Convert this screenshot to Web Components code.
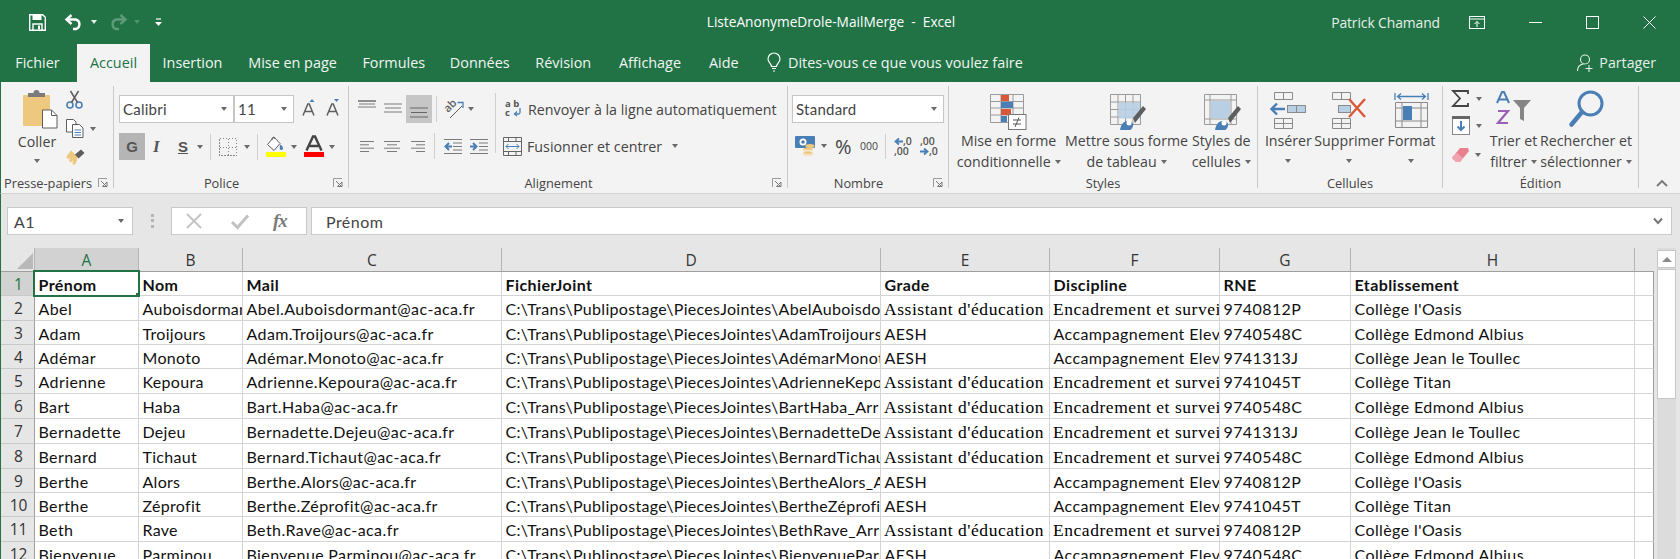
<!DOCTYPE html>
<html lang="fr"><head><meta charset="utf-8"><title>Excel</title>
<style>
html,body{margin:0;padding:0;height:559px;overflow:hidden;background:#e6e6e6}
body{font-family:"Open Sans","Noto Sans",sans-serif;color:#333}
</style></head><body>
<xl-app>
  <xl-titlebar slot="x"></xl-titlebar>
  <xl-tabs></xl-tabs>
  <xl-ribbon></xl-ribbon>
  <xl-formula></xl-formula>
  <xl-sheet></xl-sheet>
</xl-app>
<script>
const G='#7b7b7b',D='#5e5e5e',B='#4a7fb5',O='#d8593a',T='#edc87e';
const ICONS={
save:[17,17,`<path d="M.7.7h13l2.6 2.6v13H.7z" fill="none" stroke="#fff" stroke-width="1.4"/><path d="M3.5 1v5h9V1z" fill="#fff"/><path d="M4 16v-6h9v6" fill="none" stroke="#fff" stroke-width="1.4"/><rect x="9" y="11.5" width="2" height="4" fill="#fff"/>`],
undo:[19,16,`<path d="M6.5 1 1.5 5.5l5 4.5" fill="none" stroke="#fff" stroke-width="2.4"/><path d="M2 5.5h9a5 5 0 0 1 0 9.5H8" fill="none" stroke="#fff" stroke-width="2.4"/>`],
redo:[19,16,`<g opacity=".28"><path d="M12.5 1l5 4.5-5 4.5" fill="none" stroke="#fff" stroke-width="2.4"/><path d="M17 5.5H8a5 5 0 0 0 0 9.5h3" fill="none" stroke="#fff" stroke-width="2.4"/></g>`],
qat:[7,9,`<path d="M1 1h5" stroke="#fff" stroke-width="1.2"/><path d="M0 4h7L3.500 8z" fill="#fff"/>`],
display:[16,13,`<rect x=".5" y=".5" width="15" height="12" fill="none" stroke="#fff"/><path d="M0 3h16" stroke="#fff"/><path d="M8 11V5.500M5.500 8 8 5.500 10.500 8" fill="none" stroke="#fff"/>`],
min:[13,13,`<path d="M0 6.500h13" stroke="#fff"/>`],
max:[13,13,`<rect x=".5" y=".5" width="12" height="12" fill="none" stroke="#fff"/>`],
close:[13,13,`<path d="M.5.5l12 12M12.500.5l-12 12" stroke="#fff"/>`],
bulb:[14,19,`<path d="M4.500 13.500C4.500 10.500 1 9.500 1 6a6 6 0 0 1 12 0c0 3.500-3.500 4.500-3.500 7.500z" fill="none" stroke="#fff" stroke-width="1.2"/><path d="M5 15.500h4M6 18h2" stroke="#fff" stroke-width="1.2"/>`],
share:[16,18,`<circle cx="8" cy="5.500" r="4.500" fill="none" stroke="#e6efe9" stroke-width="1.1"/><path d="M.5 17c0-4 2.500-6.500 6-7" fill="none" stroke="#e6efe9" stroke-width="1.1"/><path d="M8.500 14.500h7M12 11v7" stroke="#e6efe9" stroke-width="1.1"/>`],
paste:[35,39,`<rect x="0" y="5" width="27" height="31" rx="1" fill="${T}"/><path d="M5 7V3h5.500a3 3 0 0 1 6 0H22v4z" fill="${G}"/><path d="M19.500 20h9l5.500 5.500V38H19.500z" fill="#fff" stroke="${D}"/><path d="M28.500 20v5.500H34" fill="none" stroke="${D}"/>`],
cut:[17,19,`<circle cx="4" cy="15" r="3" fill="none" stroke="${B}" stroke-width="1.6"/><circle cx="13" cy="15" r="3" fill="none" stroke="${B}" stroke-width="1.6"/><path d="M5.500 12.500 12.500 1M11.500 12.500 4.500 1" stroke="${D}" stroke-width="1.5"/>`],
copy:[18,19,`<path d="M.5.500h7l2.500 2.500v10H.5z" fill="#fff" stroke="${D}"/><path d="M6.500 5.500h7l3.500 3.500v9.500H6.500z" fill="#fff" stroke="${D}"/><path d="M8.500 11h6.500M8.500 13.500h6.500M8.500 16h6.500" stroke="${B}"/>`],
brush:[19,17,`<path d="M11 6 5 .5.500 6.500 1.500 9 4 8 3 11l2 1.500 2-2.500-.5 4 2 1C11 12 12 9 11 6z" transform="translate(0 1)" fill="${T}"/><path d="M9 5.500 15 .5l3.500 3.500-6 5.500z" fill="${D}"/>`],
grow:[15,17,`<path d="M1 16.500 5.800 5h1.400l4.800 11.500M2.800 12.500h7.400" fill="none" stroke="${D}" stroke-width="1.500"/><path d="M7.500 3 10 0l2.500 3z" fill="${B}"/>`],
shrink:[15,17,`<path d="M1 16.500 5.800 5h1.400l4.800 11.500M2.800 12.500h7.400" fill="none" stroke="${D}" stroke-width="1.500"/><path d="M8 0h5l-2.500 3z" fill="${B}"/>`],
borders:[18,18,`<path d="M.5.500h17v17H.5zM9 .5v17M.5 9h17" fill="none" stroke="#8a8a8a" stroke-dasharray="1.500 1.500" shape-rendering="crispEdges"/>`],
fill:[20,21,`<path d="M8 1 1.500 8.500 8 14.500l6-7z" fill="#fff" stroke="${D}"/><path d="M6 4c-1-3 3-4 3-1" fill="none" stroke="${D}"/><path d="M14 8.500c2 1 3 2 3 4a1.600 1.600 0 0 1-3.200 0c0-1 0-2 .2-4z" fill="${B}"/><rect x="0" y="16" width="20" height="5" fill="#ffff00"/>`],
color:[20,21,`<path d="M2.500 14.500 9 .5h2l6.500 14M5.500 10h9" fill="none" stroke="#444" stroke-width="2.400"/><rect x="0" y="16" width="20" height="5" fill="#ff0000"/>`],
atop:[18,9,`<path d="M0 1h18M1 4h16M0 7h18" stroke="${G}"/><path d="M0 1h18" stroke="#666"/>`],
amid:[18,10,`<path d="M0 1h18M1 5h16M0 9h18" stroke="${G}"/>`],
abot:[18,11,`<path d="M0 1h18M1 5.500h16M0 10h18" stroke="#666" stroke-width="1"/>`],
orient:[20,20,`<text x="1" y="11" transform="rotate(-45 6 9)" font-family="Open Sans" font-size="11" font-weight="600" fill="${D}">ab</text><path d="M6 19 18 7" stroke="${D}"/><path d="M13.500 3.500H19V9" fill="none" stroke="${B}" stroke-width="1.300"/>`],
left:[14,11,`<path d="M0 .5h14M0 3.800h9M0 7.200h14M0 10.500h9" stroke="${G}"/>`],
center:[16,11,`<path d="M0 .5h16M3 3.800h10M0 7.200h16M3 10.500h10" stroke="${G}"/>`],
right:[14,11,`<path d="M0 .5h14M5 3.800h9M0 7.200h14M5 10.500h9" stroke="${G}"/>`],
outdent:[18,15,`<path d="M0 .5h18M9 4h9M9 7.500h9M9 11h9M0 14.500h18" stroke="${G}"/><path d="M8 7.500H2M5 4 1.500 7.500 5 11" fill="none" stroke="${B}" stroke-width="2"/>`],
indent:[18,15,`<path d="M0 .5h18M9 4h9M9 7.500h9M9 11h9M0 14.500h18" stroke="${G}"/><path d="M0 7.500h6M3 4l3.500 3.500L3 11" fill="none" stroke="${B}" stroke-width="2"/>`],
wrap:[16,16,`<path d="M9.500 15h4a1.800 1.800 0 0 0 1.500-1.500V9" fill="none" stroke="${B}" stroke-width="1.300"/><path d="M12 12.500 9.500 15l2.500 2" fill="none" stroke="${B}" stroke-width="1.300"/>`],
merge:[19,19,`<path d="M.5.500h18v18H.5zM.5 4.500h18M.5 14.500h18M5.500.5v4M13 .5v4M5.500 14.500v4M13 14.500v4" fill="none" stroke="#666"/><path d="M3 9.500h13M5.500 7 3 9.500 5.500 12M13.500 7l2.500 2.500-2.500 2.500" fill="none" stroke="${B}"/>`],
currency:[20,20,`<rect x="0" y="0" width="20" height="12" rx="1" fill="${B}"/><ellipse cx="8" cy="6" rx="3.500" ry="3.500" fill="#fff"/><circle cx="8" cy="6" r="1.800" fill="${B}"/><g fill="${T}"><ellipse cx="15" cy="10" rx="4.500" ry="2"/><ellipse cx="13" cy="13.500" rx="5" ry="2"/><ellipse cx="13" cy="17.500" rx="5" ry="2"/></g><path d="M8.500 13.500a5 2 0 0 0 9 0M8.500 17.500a5 2 0 0 0 9 0" stroke="#fff" fill="none" stroke-width=".7"/>`],
arrl:[9,7,`<path d="M9 3.500H2M5 .5 1.500 3.500 5 6.500" fill="none" stroke="${B}" stroke-width="1.800"/>`],
arrr:[9,7,`<path d="M0 3.500h7M4 .5l3.500 3L4 6.500" fill="none" stroke="${B}" stroke-width="1.800"/>`],
cf:[37,36,`<path d="M.5.500h33v28H.5zM.5 7.500h33M.5 14h33M.5 21h33M11 .5v28M23 .5v28" fill="none" stroke="#9a9a9a"/><rect x="11" y="1" width="8" height="6" fill="${O}"/><rect x="11" y="8" width="12" height="6" fill="${B}"/><rect x="11" y="15" width="10" height="6" fill="${O}"/><rect x="11" y="22" width="6" height="6" fill="${B}"/><rect x="18.500" y="20.500" width="17.500" height="15" fill="#fff" stroke="#777"/><path d="M23 26h8M23 30h8M29 23.500l-4 9.500" stroke="#555" fill="none"/>`],
table:[37,36,`<path d="M.5.500h30v30H.5zM.5 8h30M.5 15.500h30M.5 23h30M8 .5v30M15.500.5v30M23 .5v30" fill="none" stroke="#9a9a9a"/><rect x="8.500" y="8.500" width="21.500" height="16" fill="#b9cfe4" opacity=".9"/><path d="M25 30 36 16l-3-3-10 12z" fill="${D}" transform="translate(0 -1)"/><path d="M10 36c1-5 3-9 8-9 3 0 6 2 5 5-.5 2-2 4-3 4z" fill="${B}"/><circle cx="19" cy="29" r="2.500" fill="#fff"/>`],
styles:[38,36,`<path d="M.5.500h32v30H.5zM.5 6h32M.5 25h32M6 .5v30M27 .5v30" fill="none" stroke="#9a9a9a"/><rect x="7" y="7" width="19" height="17" fill="#b9cfe4"/><path d="M26 30 37 16l-3-3-10 12z" fill="${D}" transform="translate(0 -1)"/><path d="M11 36c1-5 3-9 8-9 3 0 6 2 5 5-.5 2-2 4-3 4z" fill="${B}"/><circle cx="20" cy="29" r="2.500" fill="#fff"/>`],
ins:[36,37,`<path d="M4.500.5h18v7h-18zM13.500.5v7M4.500 26.500h18v10h-18zM13.500 26.500v10M4.500 31.500h18" fill="none" stroke="#8a8a8a"/><rect x="17.500" y="13.500" width="18" height="7" fill="#b9cfe4" stroke="#8a8a8a"/><path d="M26.500 13.500v7" stroke="#8a8a8a"/><path d="M15 17H2M7 11.500 1.500 17 7 22.500" fill="none" stroke="${B}" stroke-width="2.400"/>`],
del:[36,37,`<path d="M1.500.5h18v7h-18zM10.500.5v7M1.500 26.500h18v10h-18zM10.500 26.500v10M1.500 31.500h18" fill="none" stroke="#8a8a8a"/><rect x="7.500" y="13.500" width="12" height="7" fill="#b9cfe4" stroke="#8a8a8a"/><path d="M18 7l16 18M34 7 18 25" stroke="${O}" stroke-width="2.400"/>`],
fmt:[35,37,`<path d="M1 1v7M34 1v7M4 4.500h27M7 1.500 3.500 4.500 7 7.500M28 1.500l3.500 3L28 7.500" fill="none" stroke="${B}" stroke-width="1.300"/><path d="M1.500 10.500h32v25h-32zM1.500 16h32M1.500 29h32M8 10.500v25M27 10.500v25" fill="none" stroke="#8a8a8a"/><rect x="9" y="14" width="9" height="14" fill="${B}"/>`],
sigma:[17,17,`<path d="M16 4V1H1l7 7.500L1 16h15v-3" fill="none" stroke="#444" stroke-width="1.800"/>`],
filldown:[18,19,`<rect x=".5" y=".5" width="17" height="18" fill="#fff" stroke="#888"/><rect x="0" y="0" width="18" height="3" fill="#666"/><path d="M9 5v9M5.500 10.500 9 14l3.500-3.500" fill="none" stroke="${B}" stroke-width="2"/>`],
erase:[18,16,`<path d="M9 1l8 0 1 3L9 15H5L1 11z" transform="translate(-1 0)" fill="#e8808f"/><path d="M0 10l4 5h4l3-4-6-5z" fill="#f0a4ae"/>`],
sort:[36,33,`<path d="M0 11 5 0h2l5 11M2 7.500h8" transform="translate(1 0)" fill="none" stroke="${B}" stroke-width="2"/><path d="M2 19h10L2 31h10" fill="none" stroke="#9a5fb8" stroke-width="2.200"/><path d="M17 8h18l-7 8v13l-4-2V16z" fill="#858585"/>`],
find:[35,37,`<circle cx="21.500" cy="13.500" r="11.500" fill="none" stroke="${B}" stroke-width="3"/><path d="M13 22 2.500 34.500" stroke="${B}" stroke-width="4.500" stroke-linecap="round"/>`],
launch:[10,10,`<path d="M.5 9V.5H9" fill="none" stroke="#9a9a9a"/><path d="M3 3l5 5M4.500 8.500h4.500V4z" fill="none" stroke="#777"/>`],
chevup:[12,7,`<path d="M1 6l5-5 5 5" fill="none" stroke="#777" stroke-width="1.800"/>`],
chevdown:[10,8,`<path d="M1 1.500 5 6l4-4.500" fill="none" stroke="#777" stroke-width="2"/>`],
xmark:[16,16,`<path d="M1 1l14 14M15 1 1 15" stroke="#c2c2c2" stroke-width="1.800"/>`],
check:[18,15,`<path d="M1 8l5.500 5.500L17 1.500" fill="none" stroke="#c2c2c2" stroke-width="3"/>`],
corner:[16,16,`<path d="M16 0v16H0z" fill="#b9b9b9"/>`]
};
function def(name,css,html,init){
  customElements.define(name,class extends HTMLElement{
    constructor(){super();const r=this.attachShadow({mode:'open'});
      r.innerHTML=`<style>${css}</style>`+(typeof html==='function'?html(this):html);}
    connectedCallback(){ if(init) init(this); }
  });
}
def('xl-i',`:host{display:inline-flex;flex:none;line-height:0}svg{display:block;overflow:visible}`,'',el=>{
  const [w,h,s]=ICONS[el.getAttribute('n')];
  el.shadowRoot.innerHTML+=`<svg width="${w}" height="${h}" viewBox="0 0 ${w} ${h}">${s}</svg>`;
});
def('xl-c',`:host{display:inline-block;flex:none;width:0;height:0;border:3.5px solid transparent;border-top:4px solid var(--c,#6a6a6a);border-bottom:0;vertical-align:middle}`,'');

/* ---------- app ---------- */
def('xl-app',`:host{display:flex;flex-direction:column;width:1680px;height:559px;overflow:hidden}`,`<slot></slot><slot name="x"></slot>`);

/* ---------- title bar ---------- */
def('xl-titlebar',`:host{display:flex;align-items:center;height:44px;background:#217346;color:#fff;font:13.7px "Open Sans",sans-serif;order:-1;position:relative;flex:none}
.qat{display:flex;align-items:center;padding-left:29px;--c:#e8f0ea}
.title{position:absolute;left:0;right:0;top:13px;text-align:center;line-height:18px;pointer-events:none;padding-right:18px;white-space:pre}
.user{margin-left:auto;margin-right:29px;color:#e6efe9;font-size:13.9px;letter-spacing:-.1px}
.win{display:flex;align-items:center;padding-right:24px}`,
`<div class="qat"><xl-i n="save"></xl-i><xl-i n="undo" style="margin-left:19px"></xl-i><xl-c style="margin-left:7px"></xl-c><xl-i n="redo" style="margin-left:11px"></xl-i><xl-c style="margin-left:7px;--c:#4f8f6b"></xl-c><xl-i n="qat" style="margin-left:15px"></xl-i></div>
<div class="title">ListeAnonymeDrole-MailMerge  -  Excel</div>
<div class="user">Patrick Chamand</div>
<div class="win"><xl-i n="display"></xl-i><xl-i n="min" style="margin-left:44px"></xl-i><xl-i n="max" style="margin-left:44px"></xl-i><xl-i n="close" style="margin-left:44px"></xl-i></div>`);

/* ---------- tabs ---------- */
def('xl-tab',`:host{display:flex;align-items:center;justify-content:center;height:38px;box-sizing:border-box;padding-bottom:2px;color:#f0f5f2;flex:none;white-space:nowrap}
:host([on]){background:#f3f3f3;color:#217346}`,`<slot></slot>`,el=>{el.style.width=el.getAttribute('w')+'px'});
def('xl-tabs',`:host{display:flex;height:38px;flex:none;background:#217346;font:14.4px "Open Sans",sans-serif;color:#fff;align-items:center}
.tell{display:flex;align-items:center;margin-left:15px;color:#f0f5f2;gap:7px;padding-bottom:2px}
.share{margin-left:auto;margin-right:24px;display:flex;align-items:center;gap:6px;color:#e6efe9;padding-bottom:1px;font-size:14.2px}`,
`<xl-tab w="75">Fichier</xl-tab><xl-tab w="2"></xl-tab><xl-tab w="73" on>Accueil</xl-tab><xl-tab w="85">Insertion</xl-tab><xl-tab w="115">Mise en page</xl-tab><xl-tab w="87.500">Formules</xl-tab><xl-tab w="84.500">Données</xl-tab><xl-tab w="82.500">Révision</xl-tab><xl-tab w="91">Affichage</xl-tab><xl-tab w="56.500">Aide</xl-tab>
<div class="tell"><xl-i n="bulb"></xl-i><span>Dites-vous ce que vous voulez faire</span></div>
<div class="share"><xl-i n="share"></xl-i><span>Partager</span></div>`);

/* ---------- ribbon parts ---------- */
def('xl-group',`:host{display:flex;flex-direction:column;flex:none;height:111px;box-sizing:border-box;position:relative;border-right:1px solid transparent}
.sep{position:absolute;right:-1px;top:4px;bottom:5px;width:1px;background:#c9c9c9}
.body{display:flex;height:93px;box-sizing:border-box;flex:none}
.label{display:flex;align-items:center;justify-content:center;height:16px;font-size:12.8px;color:#444;position:relative;white-space:nowrap}
:host([launch]) .label{padding-right:19px}
.label xl-i{position:absolute;top:3px;right:5px}`,
el=>`<div class="sep"></div><div class="body"><slot></slot></div><div class="label"><span class="t"></span><xl-i n="launch" class="li"></xl-i></div>`,
el=>{const s=el.shadowRoot;el.style.width=el.getAttribute('w')+'px';s.querySelector('.t').textContent=el.getAttribute('label');
 if(!el.hasAttribute('launch')) s.querySelector('.li').remove();
 if(el.hasAttribute('lp')) s.querySelector('.label').style.cssText+=';justify-content:flex-start;padding-left:'+el.getAttribute('lp')+'px';});
def('xl-big',`:host{display:flex;flex-direction:column;align-items:center;flex:none;font-size:14.2px;line-height:20.500px;color:#444;text-align:center;white-space:nowrap}
.ic{height:49px;display:flex;align-items:flex-start;justify-content:center;padding-top:var(--pt,8px);box-sizing:border-box}
.txt{display:flex;flex-direction:column;align-items:center}`,
el=>`<div class="ic"><slot name="i"></slot></div><div class="txt"><slot></slot></div>`);
def('xl-combo',`:host{display:flex;align-items:center;justify-content:space-between;height:28px;box-sizing:border-box;background:#fff;border:1px solid #c6c6c6;padding:0 6px 0 3px;font:15px "Lato",sans-serif;letter-spacing:.25px;color:#444;flex:none}`,`<slot></slot><xl-c></xl-c>`,el=>{el.style.width=el.getAttribute('w')+'px'});
def('xl-col',`:host{display:flex;flex-direction:column;flex:none}`,`<slot></slot>`);
def('xl-row',`:host{display:flex;align-items:center;flex:none}`,`<slot></slot>`);
def('xl-tsep',`:host{display:block;width:1px;height:26px;background:#cfcfcf;flex:none}`,``);

def('xl-ribbon',`:host{display:flex;height:112px;flex:none;background:#f3f3f3;border-bottom:1px solid #d2d2d2;box-sizing:border-box;border-left:1px solid #217346;color:#444;font:14.2px "Open Sans",sans-serif;position:relative}
.b{font:bold 15px "Open Sans",sans-serif;color:#555}
.t{white-space:nowrap;font-size:14.25px;color:#444}
.chev{position:absolute;right:12px;bottom:6px}
.dec{display:flex;flex-direction:column;font:600 10.500px/10px "Open Sans",sans-serif;color:#555;width:18px}
.dec span{display:flex;align-items:center}`,
`<xl-group w="113" label="Presse-papiers" launch lp="3">
  <xl-col style="margin:8px 0 0 22px;align-items:center;width:35px"><xl-i n="paste"></xl-i><span style="margin:3px 7px 0 0;line-height:20px">Coller</span><xl-c style="margin:7px 7px 0 0"></xl-c></xl-col>
  <xl-col style="margin:8px 0 0 8px"><xl-i n="cut"></xl-i><xl-row style="margin-top:10px"><xl-i n="copy"></xl-i><xl-c style="margin-left:6px"></xl-c></xl-row><xl-i n="brush" style="margin-top:11px"></xl-i></xl-col>
</xl-group>
<xl-group w="235" label="Police" launch>
  <xl-col style="margin:13px 0 0 5px">
    <xl-row><xl-combo w="115">Calibri</xl-combo><xl-combo w="60">11</xl-combo><xl-i n="grow" style="margin-left:8px;margin-top:-4px"></xl-i><xl-i n="shrink" style="margin-left:9px;margin-top:-4px"></xl-i></xl-row>
    <xl-row style="margin-top:10px;height:27px"><span class="b" style="width:26px;height:27px;background:#b5b5b5;display:flex;align-items:center;justify-content:center;font-family:'Liberation Sans'">G</span>
      <span class="b" style="margin-left:8px;width:12px;font-style:italic;font-family:'Liberation Serif';font-size:17px">I</span>
      <span class="b" style="margin-left:13px;text-decoration:underline;font-family:'Liberation Sans'">S</span><xl-c style="margin-left:9px"></xl-c>
      <xl-tsep style="margin-left:7px"></xl-tsep><xl-i n="borders" style="margin-left:8px"></xl-i><xl-c style="margin-left:7px"></xl-c>
      <xl-tsep style="margin-left:7px"></xl-tsep><xl-i n="fill" style="margin-left:8px"></xl-i><xl-c style="margin-left:5px"></xl-c><xl-i n="color" style="margin-left:7px"></xl-i><xl-c style="margin-left:5px"></xl-c></xl-row>
  </xl-col>
</xl-group>
<xl-group w="439" label="Alignement" launch>
  <xl-col style="margin:13px 0 0 9px">
    <xl-row style="height:28px"><xl-i n="atop" style="margin-bottom:9px"></xl-i><xl-i n="amid" style="margin-left:8px;margin-bottom:2px"></xl-i>
      <span style="margin-left:4px;width:26px;height:28px;background:#c6c6c6;display:flex;align-items:flex-end;justify-content:center;padding-bottom:5px;box-sizing:border-box"><xl-i n="abot"></xl-i></span>
      <xl-tsep style="margin-left:4px"></xl-tsep><xl-i n="orient" style="margin-left:7px"></xl-i><xl-c style="margin-left:4px"></xl-c></xl-row>
    <xl-row style="margin-top:10px;height:26px"><xl-i n="left" style="margin-left:2px"></xl-i><xl-i n="center" style="margin-left:10px"></xl-i><xl-i n="right" style="margin-left:11px"></xl-i><xl-tsep style="margin-left:9px"></xl-tsep><xl-i n="outdent" style="margin-left:9px"></xl-i><xl-i n="indent" style="margin-left:8px"></xl-i></xl-row>
  </xl-col>
  <xl-tsep style="height:60px;margin:11px 0 0 7px"></xl-tsep>
  <xl-col style="margin:13px 0 0 7px">
    <xl-row style="height:28px"><span style="width:17px;height:20px;position:relative;display:block;margin-left:2px;font:bold 9.500px/9px 'Open Sans';color:#555"><span style="display:block">a b</span><span style="display:block">c</span><xl-i n="wrap" style="position:absolute;left:0;top:0"></xl-i></span><span class="t" style="margin-left:6px">Renvoyer à la ligne automatiquement</span></xl-row>
    <xl-row style="margin-top:10px;height:26px"><xl-i n="merge"></xl-i><span class="t" style="margin-left:5px">Fusionner et centrer</span><xl-c style="margin-left:10px"></xl-c></xl-row>
  </xl-col>
</xl-group>
<xl-group w="161" label="Nombre" launch>
  <xl-col style="margin:13px 0 0 4px">
    <xl-combo w="152">Standard</xl-combo>
    <xl-row style="margin-top:13px;height:20px"><xl-i n="currency" style="margin-left:3px"></xl-i><xl-c style="margin-left:6px"></xl-c><span style="margin-left:8px;font-size:20px;width:19px">%</span><span style="margin-left:6px;font-size:10.500px;width:20px">000</span><xl-tsep style="margin-left:5px;height:25px"></xl-tsep>
    <div class="dec" style="margin-left:8px"><span><xl-i n="arrl"></xl-i>,0</span><span>,00</span></div><div class="dec" style="margin-left:8px"><span>,00</span><span><xl-i n="arrr"></xl-i>,0</span></div></xl-row>
  </xl-col>
</xl-group>
<xl-group w="309" label="Styles">
  <xl-big style="width:119.400px;--pt:12px"><xl-i slot="i" n="cf"></xl-i><span>Mise en forme</span><xl-row>conditionnelle<xl-c style="margin-left:4px"></xl-c></xl-row></xl-big>
  <xl-big style="width:116.400px;--pt:12px"><xl-i slot="i" n="table" style="margin-left:3px"></xl-i><span>Mettre sous forme</span><xl-row>de tableau<xl-c style="margin-left:4px"></xl-c></xl-row></xl-big>
  <xl-big style="width:73px;--pt:12px"><xl-i slot="i" n="styles" style="margin-left:4px"></xl-i><span>Styles de</span><xl-row>cellules<xl-c style="margin-left:4px"></xl-c></xl-row></xl-big>
</xl-group>
<xl-group w="185" label="Cellules">
  <xl-big style="width:60.800px;--pt:10px"><xl-i slot="i" n="ins"></xl-i><span>Insérer</span><xl-c style="margin-top:7px"></xl-c></xl-big>
  <xl-big style="width:61.200px;--pt:10px"><xl-i slot="i" n="del"></xl-i><span>Supprimer</span><xl-c style="margin-top:7px"></xl-c></xl-big>
  <xl-big style="width:63px;--pt:10px"><xl-i slot="i" n="fmt"></xl-i><span>Format</span><xl-c style="margin-top:7px"></xl-c></xl-big>
</xl-group>
<xl-group w="196" label="Édition">
  <xl-col style="margin:8px 0 0 9px;width:33px"><xl-row><xl-i n="sigma"></xl-i><xl-c style="margin-left:7px"></xl-c></xl-row><xl-row style="margin-top:9px"><xl-i n="filldown"></xl-i><xl-c style="margin-left:6px"></xl-c></xl-row><xl-row style="margin-top:12px"><xl-i n="erase"></xl-i><xl-c style="margin-left:5px"></xl-c></xl-row></xl-col>
  <xl-big style="width:45px;margin-left:6px;--pt:10px"><xl-i slot="i" n="sort"></xl-i><span>Trier et</span><xl-row>filtrer<xl-c style="margin-left:4px"></xl-c></xl-row></xl-big>
  <xl-big style="width:100px;--pt:8px"><xl-i slot="i" n="find"></xl-i><span>Rechercher et</span><xl-row>sélectionner<xl-c style="margin-left:4px"></xl-c></xl-row></xl-big>
</xl-group>
<xl-i n="chevup" class="chev"></xl-i>`);

/* ---------- formula bar ---------- */
def('xl-formula',`:host{display:flex;align-items:center;height:54px;flex:none;box-sizing:border-box;padding:13px 8px 13px 7px;border-left:1px solid #217346;margin-left:0;background:#e6e6e6;font:16px "Lato",sans-serif;letter-spacing:.45px;color:#444;align-items:stretch}
.box{background:#fff;border:1px solid #c9c9c9;box-sizing:border-box;display:flex;align-items:center;height:28px}
.name{width:126px;padding:0 8px 0 6px;justify-content:space-between;margin-left:-1px}
.dots{width:38px;display:flex;justify-content:center;align-items:center}
.dots i{display:block;width:3px;height:14px;background:repeating-linear-gradient(#b5b5b5 0 3px,transparent 3px 5.500px)}
.fx{width:136px;padding-left:14px;gap:0}
.fxt{font:italic bold 19px "Liberation Serif",serif;color:#7b7b7b;margin-left:24px;letter-spacing:-1px}
.in{flex:1;margin-left:4px;padding:0 8px 0 14px;justify-content:space-between}`,
`<div class="box name"><span>A1</span><xl-c></xl-c></div><div class="dots"><i></i></div>
<div class="box fx"><xl-i n="xmark"></xl-i><xl-i n="check" style="margin-left:29px"></xl-i><span class="fxt">fx</span></div>
<div class="box in"><span>Prénom</span><xl-i n="chevdown"></xl-i></div>`);

/* ---------- sheet ---------- */
const P='C:\\Trans\\Publipostage\\PiecesJointes\\';
const AS="Assistant d'éducation",EN='Encadrement et surveillance',AE='AESH',AC='Accampagnement Eleves';
const CO=['Collège l\'Oasis','Collège Edmond Albius','Collège Jean le Toullec','Collège Titan'],RN=['9740812P','9740548C','9741313J','9741045T'];
const ROWS=[['Abel','Auboisdormant',1,0],['Adam','Troijours',0,1],['Adémar','Monoto',0,2],['Adrienne','Kepoura',1,3],['Bart','Haba',1,1],['Bernadette','Dejeu',1,2],['Bernard','Tichaut',1,1],['Berthe','Alors',0,0],['Berthe','Zéprofit',0,3],['Beth','Rave',1,0],['Bienvenue','Parminou',0,1]];
def('xl-sheet',`:host{display:flex;flex:1;min-height:0;position:relative;background:#e6e6e6;border-left:1px solid #217346;font:16px "Lato",sans-serif;letter-spacing:.4px;color:#111;overflow:hidden}
.g{display:grid;grid-template-columns:34px 104px 104px 259px 379px 169px 170px 131px 284px 19px;grid-template-rows:24px 24px 25px 24px 24px 25px 25px 25px 25px 24px 24px 25px 18px;flex:none;align-content:start;position:relative}
.g>div{box-sizing:border-box;white-space:nowrap;overflow:hidden}
.ch{background:#e6e6e6;border-right:1px solid #b4b4b4;border-bottom:1px solid #9f9f9f;text-align:center;color:#333;font-family:"Open Sans",sans-serif;font-size:15.500px;line-height:25px;letter-spacing:0}
.ch.on{background:#d2d2d2;color:#217346;border-right-color:#b4b4b4}
.ch.s{border-right:0}
.rh{background:#e6e6e6;border-right:1px solid #9f9f9f;border-bottom:1px solid #c9c9c9;text-align:center;font:15.500px/24px "Open Sans",sans-serif;letter-spacing:0;color:#333;padding-left:2px}
.rh.on{background:#d2d2d2;color:#217346}
.c{background:#fff;border-right:1px solid #d4d4d4;border-bottom:1px solid #d4d4d4;padding:1px 0 0 3.500px;line-height:23px}
.c.h{font-weight:700}
.c.b{letter-spacing:.3px}
.c.d{letter-spacing:.3px}
.c.s{font:17.500px/23px "Liberation Serif",serif;letter-spacing:.55px;padding:2px 0 0 3px;color:#000}
.c.i{border-right:1px solid #9f9f9f}
.corner{padding:3px 0 0 15px}
.sel{position:absolute;left:32px;top:22px;width:107px;height:27px;box-sizing:border-box;border:2px solid #217346}
.sel:after{content:"";position:absolute;right:-4px;bottom:-4px;width:5px;height:5px;background:#217346;border:1px solid #fff}
.sb{display:flex;flex-direction:column;margin-left:3px;width:19px;flex:none;background:#dcdcdc;padding-top:2px;box-sizing:border-box}
.up{height:18px;background:#fff;border:1px solid #c6c6c6;box-sizing:border-box;display:flex;align-items:center;justify-content:center;flex:none}
.thumb{height:130px;background:#fff;border:1px solid #c6c6c6;box-sizing:border-box;margin-top:1px;flex:none}`,
el=>{
 let h=`<div class="g"><div class="ch corner"><xl-i n="corner"></xl-i></div>`;
 'ABCDEFGH'.split('').forEach((c,i)=>h+=`<div class="ch${i==0?' on':''}">${c}</div>`);
 h+=`<div class="ch s"></div><div class="rh on">1</div>`;
 ['Prénom','Nom','Mail','FichierJoint','Grade','Discipline','RNE','Etablissement'].forEach(t=>h+=`<div class="c h">${t}</div>`);
 h+=`<div class="c i"></div>`;
 ROWS.forEach((r,i)=>{const as=r[2],mail=`${r[0]}.${r[1]}@ac-aca.fr`;
  h+=`<div class="rh">${i+2}</div><div class="c">${r[0]}</div><div class="c b">${r[1]}</div><div class="c">${mail}</div><div class="c d">${P}${r[0]}${r[1]}_Arr</div>`;
  h+=as?`<div class="c s">${AS}</div><div class="c s">${EN}</div>`:`<div class="c">${AE}</div><div class="c">${AC}</div>`;
  h+=`<div class="c">${RN[r[3]]}</div><div class="c">${CO[r[3]]}</div><div class="c i"></div>`;
 });
 h+=`<div class="sel"></div></div><div class="sb"><div class="up"><xl-c style="--c:#8a8a8a;border-width:5px;border-top:0;border-bottom:5px solid #8a8a8a"></xl-c></div><div class="thumb"></div></div>`;
 return h;
});
</script>
</body></html>
